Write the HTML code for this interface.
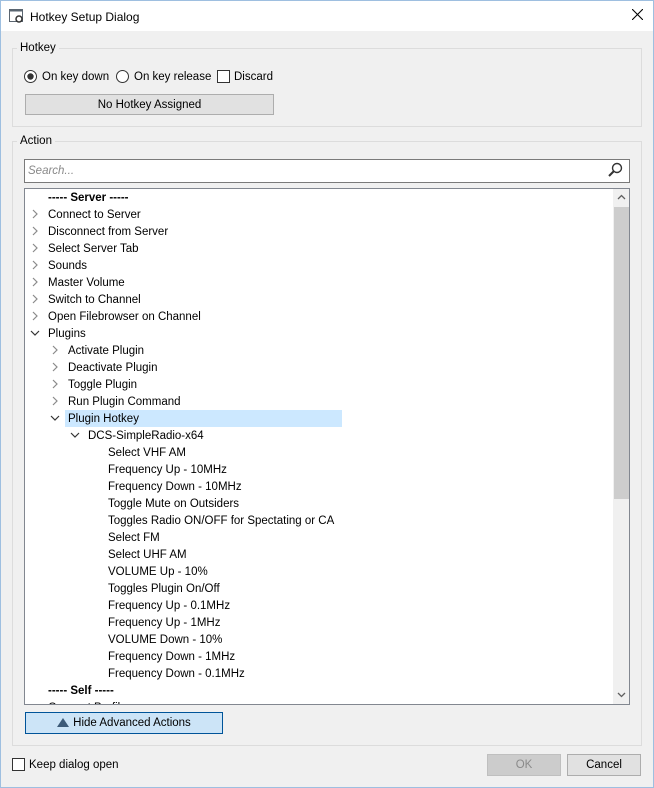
<!DOCTYPE html>
<html><head><style>
*{box-sizing:border-box;margin:0;padding:0}
body{width:654px;height:788px;background:#f0f0f0;font-family:"Liberation Sans",sans-serif;font-size:11.5px;color:#000;position:relative;overflow:hidden;}
.a{position:absolute}
.title{left:0;top:0;width:654px;height:31px;background:#fff}
.gb{border:1px solid #dcdcdc}
.lbl{background:#f0f0f0;padding:0 3px}
.btn{background:#e1e1e1;border:1px solid #adadad;text-align:center;line-height:20px}
.row{position:absolute;height:17px;line-height:19px;white-space:nowrap}
</style></head><body>
<div class="a title"></div>
<svg class="a" style="left:9px;top:8px" width="16" height="16"><rect x="0.5" y="1.5" width="13" height="12" fill="#fff" stroke="#5a6570"/><rect x="0.5" y="1.5" width="13" height="2" fill="#5a6570"/><circle cx="10" cy="11" r="3" fill="#fff" stroke="#333" stroke-width="1.5"/></svg>
<div class="a" style="left:30px;top:10px;font-size:12px">Hotkey Setup Dialog</div>
<svg class="a" style="left:632px;top:9px" width="11" height="11"><path d="M0 0L11 11M11 0L0 11" stroke="#000" stroke-width="1.1"/></svg>

<div class="a gb" style="left:12px;top:48px;width:630px;height:79px"></div>
<div class="a lbl" style="left:17px;top:42px">Hotkey</div>
<svg class="a" style="left:24px;top:70px" width="13" height="13"><circle cx="6.5" cy="6.5" r="6" fill="#fff" stroke="#333"/><circle cx="6.5" cy="6.5" r="3.2" fill="#333"/></svg>
<div class="a" style="left:42px;top:71px">On key down</div>
<svg class="a" style="left:116px;top:70px" width="13" height="13"><circle cx="6.5" cy="6.5" r="6" fill="#fff" stroke="#333"/></svg>
<div class="a" style="left:134px;top:71px">On key release</div>
<div class="a" style="left:217px;top:70px;width:13px;height:13px;border:1px solid #333;background:#fff"></div>
<div class="a" style="left:234px;top:71px">Discard</div>
<div class="a btn" style="left:25px;top:94px;width:249px;height:21px">No Hotkey Assigned</div>

<div class="a gb" style="left:12px;top:141px;width:630px;height:605px"></div>
<div class="a lbl" style="left:17px;top:135px">Action</div>
<div class="a" style="left:24px;top:159px;width:606px;height:24px;border:1px solid #7a7a7a;background:#fff"></div>
<div class="a" style="left:28px;top:165px;color:#888;font-style:italic">Search...</div>
<svg class="a" style="left:607px;top:162px" width="16" height="16"><circle cx="10" cy="6" r="4.5" fill="none" stroke="#333" stroke-width="1.4"/><path d="M7 9L2 14" stroke="#333" stroke-width="2"/></svg>

<div class="a" style="left:24px;top:188px;width:606px;height:517px;border:1px solid #828790;background:#fff;overflow:hidden">
<div class="a" style="left:588px;top:0;width:17px;height:515px;background:#f0f0f0"></div>
<div class="a" style="left:589px;top:18px;width:15px;height:292px;background:#cdcdcd"></div>
<svg class="a" style="left:592px;top:5px" width="9" height="6"><path d="M1 5L4.5 1.5L8 5" stroke="#606060" fill="none" stroke-width="1.3"/></svg>
<svg class="a" style="left:592px;top:503px" width="9" height="6"><path d="M1 1L4.5 4.5L8 1" stroke="#606060" fill="none" stroke-width="1.3"/></svg>
<div class="a" style="left:40px;top:221px;width:277px;height:17px;background:#cce8ff"></div>
</div>
<div class="a" style="left:25px;top:189px;width:588px;height:515px;overflow:hidden">
<div class="row" style="top:0;left:23px;font-weight:bold">----- Server -----</div>
<div class="row" style="top:17px;left:23px">Connect to Server</div>
<div class="row" style="top:34px;left:23px">Disconnect from Server</div>
<div class="row" style="top:51px;left:23px">Select Server Tab</div>
<div class="row" style="top:68px;left:23px">Sounds</div>
<div class="row" style="top:85px;left:23px">Master Volume</div>
<div class="row" style="top:102px;left:23px">Switch to Channel</div>
<div class="row" style="top:119px;left:23px">Open Filebrowser on Channel</div>
<div class="row" style="top:136px;left:23px">Plugins</div>
<div class="row" style="top:153px;left:43px">Activate Plugin</div>
<div class="row" style="top:170px;left:43px">Deactivate Plugin</div>
<div class="row" style="top:187px;left:43px">Toggle Plugin</div>
<div class="row" style="top:204px;left:43px">Run Plugin Command</div>
<div class="row" style="top:221px;left:43px">Plugin Hotkey</div>
<div class="row" style="top:238px;left:63px">DCS-SimpleRadio-x64</div>
<div class="row" style="top:255px;left:83px">Select VHF AM</div>
<div class="row" style="top:272px;left:83px">Frequency Up - 10MHz</div>
<div class="row" style="top:289px;left:83px">Frequency Down - 10MHz</div>
<div class="row" style="top:306px;left:83px">Toggle Mute on Outsiders</div>
<div class="row" style="top:323px;left:83px">Toggles Radio ON/OFF for Spectating or CA</div>
<div class="row" style="top:340px;left:83px">Select FM</div>
<div class="row" style="top:357px;left:83px">Select UHF AM</div>
<div class="row" style="top:374px;left:83px">VOLUME Up - 10%</div>
<div class="row" style="top:391px;left:83px">Toggles Plugin On/Off</div>
<div class="row" style="top:408px;left:83px">Frequency Up - 0.1MHz</div>
<div class="row" style="top:425px;left:83px">Frequency Up - 1MHz</div>
<div class="row" style="top:442px;left:83px">VOLUME Down - 10%</div>
<div class="row" style="top:459px;left:83px">Frequency Down - 1MHz</div>
<div class="row" style="top:476px;left:83px">Frequency Down - 0.1MHz</div>
<div class="row" style="top:493px;left:23px;font-weight:bold">----- Self -----</div>
<div class="row" style="top:510px;left:23px">Connect Profile</div>
<svg class="a" style="left:0;top:0" width="80" height="515" fill="none" stroke="#8a8a8a" stroke-width="1.2">
<path d="M8 21l4 4-4 4M8 38l4 4-4 4M8 55l4 4-4 4M8 72l4 4-4 4M8 89l4 4-4 4M8 106l4 4-4 4M8 123l4 4-4 4"/>
<path d="M6 142l4 4 4-4" stroke="#333"/>
<path d="M28 157l4 4-4 4M28 174l4 4-4 4M28 191l4 4-4 4M28 208l4 4-4 4"/>
<path d="M26 227l4 4 4-4" stroke="#333"/>
<path d="M46 244l4 4 4-4" stroke="#333"/>
</svg>
</div>

<div class="a" style="left:25px;top:712px;width:198px;height:22px;background:#cce4f7;border:1px solid #005499;text-align:center;line-height:21px"><span style="display:inline-block;width:0;height:0;border-left:6px solid transparent;border-right:6px solid transparent;border-bottom:9px solid #3c5a78;vertical-align:-1px;margin-right:4px"></span>Hide Advanced Actions</div>

<div class="a" style="left:12px;top:758px;width:13px;height:13px;border:1px solid #333;background:#fff"></div>
<div class="a" style="left:29px;top:759px">Keep dialog open</div>
<div class="a btn" style="left:487px;top:754px;width:74px;height:22px;background:#ccc;border-color:#bfbfbf;color:#8a8a8a;line-height:21px">OK</div>
<div class="a btn" style="left:567px;top:754px;width:74px;height:22px;line-height:21px">Cancel</div>
<div class="a" style="left:0;top:0;width:654px;height:788px;border:1px solid #9ebfe0;pointer-events:none"></div>
</body></html>
